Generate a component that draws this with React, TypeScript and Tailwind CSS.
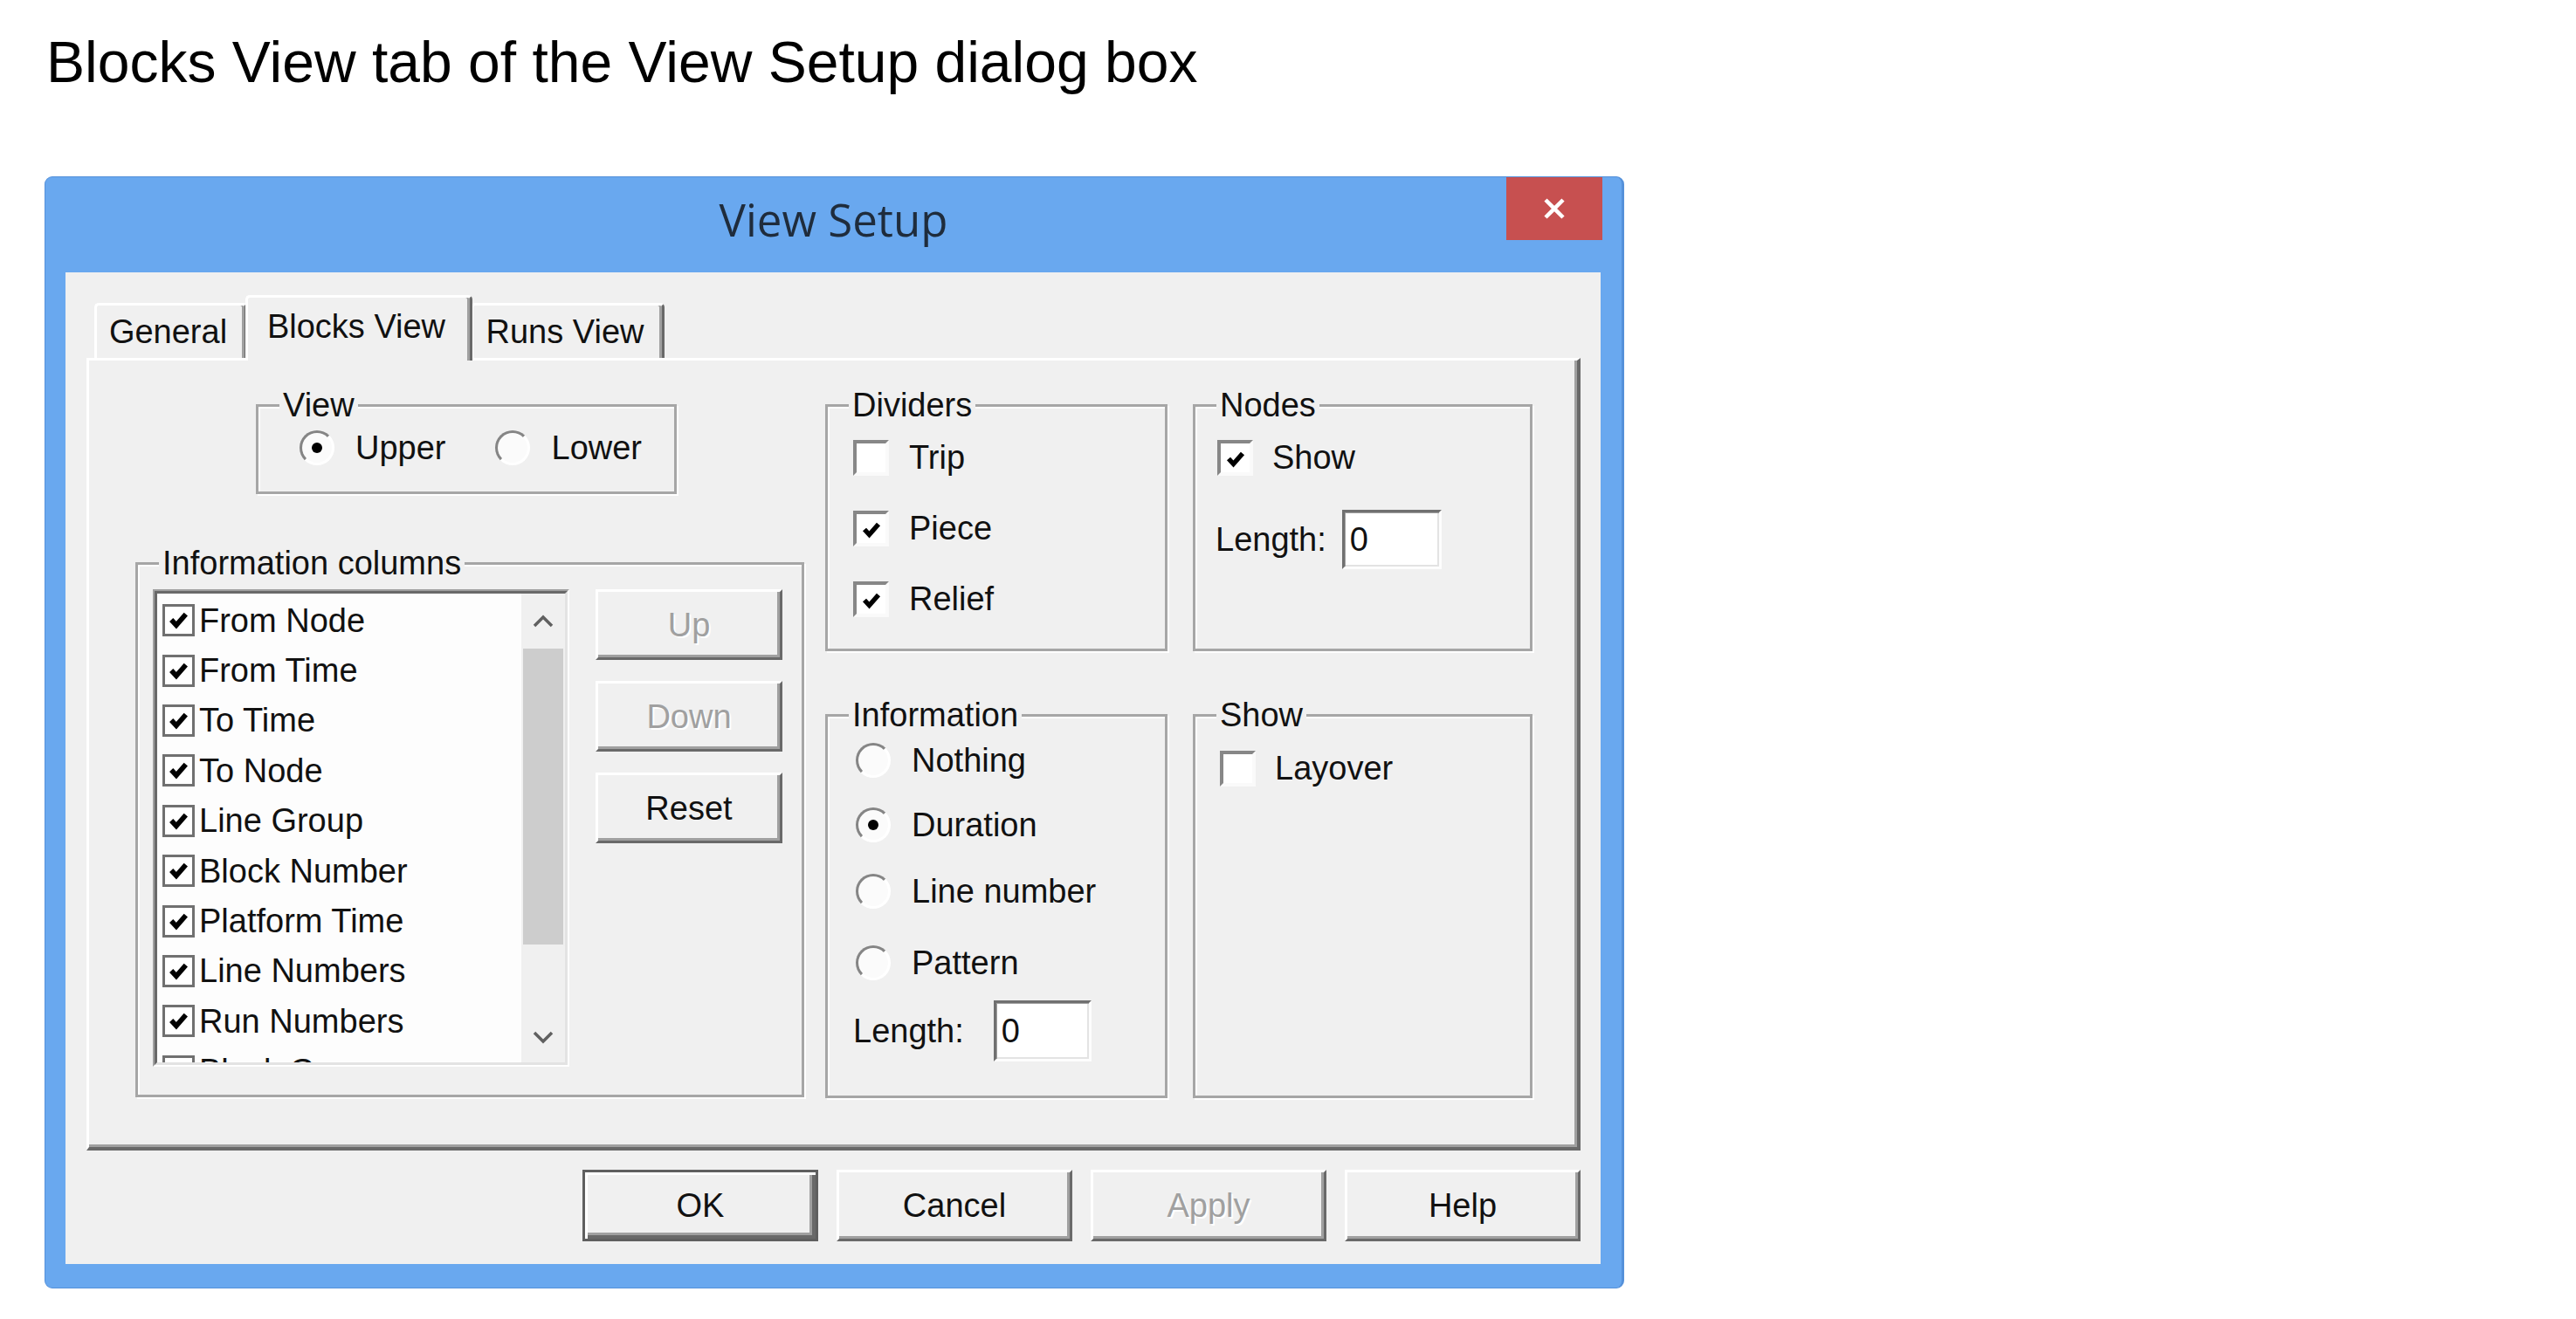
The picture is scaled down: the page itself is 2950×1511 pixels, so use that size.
import React from "react";

const ITEMS = [
  "From Node",
  "From Time",
  "To Time",
  "To Node",
  "Line Group",
  "Block Number",
  "Platform Time",
  "Line Numbers",
  "Run Numbers",
  "Block Group",
];

function Check({ size = 22 }: { size?: number }) {
  return (
    <svg width={size} height={size} viewBox="0 0 24 24">
      <polyline points="4,11.5 9.5,17.5 20,5.5" fill="none" stroke="#000" strokeWidth={5.5} />
    </svg>
  );
}

function Chevron({ up }: { up?: boolean }) {
  return (
    <svg width="26" height="16" viewBox="0 0 26 16">
      <polyline
        points={up ? "3,13 13,3 23,13" : "3,3 13,13 23,3"}
        fill="none"
        stroke="#606060"
        strokeWidth={3.5}
      />
    </svg>
  );
}

// etched group box, label sits over the top line
function Group({
  label,
  className,
  children,
}: {
  label: string;
  className: string;
  children?: React.ReactNode;
}) {
  return (
    <div
      className={
        "relative border-[3px] border-[#a6a6a6] shadow-[inset_2px_2px_0_#fff,2px_2px_0_#fff] " + className
      }
    >
      <span className="absolute -top-[24px] left-[24px] bg-[#f0f0f0] px-[4px] leading-[44px]">{label}</span>
      {children}
    </div>
  );
}

function Radio({ checked }: { checked?: boolean }) {
  return (
    <div className="flex h-[40px] w-[40px] shrink-0 items-center justify-center rounded-full border-[3px] border-t-[#858585] border-l-[#858585] border-b-white border-r-white bg-[#fbfbfb]">
      {checked && <div className="h-[12px] w-[12px] rounded-full bg-black" />}
    </div>
  );
}

function Check3D({ checked }: { checked?: boolean }) {
  return (
    <div className="flex h-[41px] w-[41px] shrink-0 items-end justify-center border-[4px] border-t-[#878787] border-l-[#878787] border-b-[#fafafa] border-r-[#fafafa] bg-white pb-[3px]">
      {checked && <Check size={24} />}
    </div>
  );
}

function Field({ className }: { className: string }) {
  return (
    <div
      className={
        "flex items-center border-[3px] border-t-[#707070] border-l-[#707070] border-b-[#fdfdfd] border-r-[#fdfdfd] bg-white pl-[6px] shadow-[inset_1px_1px_0_#a0a0a0,inset_-2px_-2px_0_#e3e3e3] " +
        className
      }
    >
      0
    </div>
  );
}

function Button({
  label,
  disabled,
  primary,
  className,
}: {
  label: string;
  disabled?: boolean;
  primary?: boolean;
  className: string;
}) {
  const frame = primary
    ? "border-[3px] border-[#5f5f5f] shadow-[inset_3px_3px_0_#fff,inset_-4px_-4px_0_#696969,inset_-7px_-7px_0_#a0a0a0]"
    : "border-[3px] border-t-white border-l-white border-b-[#696969] border-r-[#696969] shadow-[inset_-3px_-3px_0_#a0a0a0]";
  const text = disabled ? "text-[#a0a0a0] [text-shadow:2px_2px_0_#fff]" : "text-[#111]";
  return (
    <div className={`flex items-center justify-center bg-[#f0f0f0] ${frame} ${text} ${className}`}>{label}</div>
  );
}

function Listbox() {
  return (
    <div className="h-[547px] w-[477px] border-[2px] border-t-[#a0a0a0] border-l-[#a0a0a0] border-b-white border-r-white">
      <div className="flex h-full w-full border-[3px] border-t-[#696969] border-l-[#696969] border-b-[#e3e3e3] border-r-[#e3e3e3] bg-[#fdfdfd]">
        <div className="flex-1 overflow-hidden pl-[6px] pt-[2px]">
          {ITEMS.map((item) => (
            <div key={item} className="flex h-[57.4px] items-center gap-[5px]">
              <div className="flex h-[37px] w-[37px] shrink-0 items-center justify-center border-[3px] border-[#707070] bg-white">
                <Check size={25} />
              </div>
              <span className="whitespace-nowrap">{item}</span>
            </div>
          ))}
        </div>
        <div className="flex w-[50px] flex-col bg-[#f0f0f0]">
          <div className="flex h-[63px] items-center justify-center">
            <Chevron up />
          </div>
          <div className="mx-[2px] h-[339px] bg-[#cdcdcd]" />
          <div className="flex-1" />
          <div className="flex h-[59px] items-center justify-center">
            <Chevron />
          </div>
        </div>
      </div>
    </div>
  );
}

function Tab({ label, className }: { label: string; className: string }) {
  return (
    <div
      className={
        "flex h-[63px] items-center justify-center rounded-t-[5px] border-[3px] border-b-0 border-t-white border-l-white border-r-[#696969] bg-[#f0f0f0] pr-[6px] shadow-[inset_-3px_0_0_#a0a0a0] " +
        className
      }
    >
      {label}
    </div>
  );
}

export default function App() {
  return (
    <div className="min-h-screen w-full bg-white font-['Liberation_Sans',Arial,sans-serif] text-black">
      <div className="pl-[53px] pt-[38px] text-[66px] leading-[66px]">Blocks View tab of the View Setup dialog box</div>

      <div className="ml-[51px] mt-[98px] flex h-[1274px] w-[1809px] flex-col rounded-[9px] border border-r-[3px] border-[#5591da] bg-[#69a8ef]">
        {/* title bar */}
        <div className="grid h-[109px] grid-cols-[1fr_auto_1fr]">
          <div />
          <div className="pt-[14px] font-['Open_Sans',sans-serif] text-[51px] leading-[68px] text-[#1f2c3c]">
            View Setup
          </div>
          <div className="mr-[22px] flex h-[72px] w-[110px] items-center justify-center justify-self-end bg-[#c75050]">
            <svg width="30" height="28" viewBox="0 0 30 28">
              <path d="M5 4 L25 24 M25 4 L5 24" stroke="#fff" strokeWidth={4.5} />
            </svg>
          </div>
        </div>

        {/* client area */}
        <div className="ml-[23px] flex h-[1136px] w-[1758px] flex-col bg-[#f0f0f0] pl-[24px] pr-[23px] pt-[26px] text-[38px] leading-[44px] text-[#111]">
          {/* tabs */}
          <div className="flex h-[72px] items-end">
            <Tab label="General" className="ml-[9px] w-[175px]" />
            <div className="relative z-10 -mb-[3px] -ml-[2px] flex h-[75px] w-[260px] items-center justify-center rounded-t-[5px] border-[3px] border-b-0 border-t-white border-l-white border-r-[#696969] bg-[#f0f0f0] pb-[6px] pr-[6px] shadow-[inset_-3px_0_0_#a0a0a0]">
              Blocks View
            </div>
            <Tab label="Runs View" className="-ml-[2px] w-[222px]" />
          </div>

          {/* tab page */}
          <div className="flex h-[908px] border-[3px] border-b-[4px] border-r-[4px] border-t-white border-l-white border-b-[#696969] border-r-[#696969] pl-[53px] pt-[50px] shadow-[inset_-3px_-3px_0_#a0a0a0]">
            <div className="flex w-[766px] flex-col">
              <Group label="View" className="ml-[138px] h-[103px] w-[482px]">
                <div className="ml-[47px] mt-[25px] flex h-[44px] items-center">
                  <Radio checked />
                  <span className="ml-[24px]">Upper</span>
                  <div className="ml-[56px]">
                    <Radio />
                  </div>
                  <span className="ml-[25px]">Lower</span>
                </div>
              </Group>

              <Group
                label="Information columns"
                className="mt-[78px] flex h-[613px] w-[766px] gap-[30px] pl-[17px] pt-[28px]"
              >
                <Listbox />
                <div className="flex flex-col gap-[24px]">
                  <Button label="Up" disabled className="h-[81px] w-[214px]" />
                  <Button label="Down" disabled className="h-[81px] w-[214px]" />
                  <Button label="Reset" className="h-[81px] w-[214px]" />
                </div>
              </Group>
            </div>

            <div className="ml-[24px] flex w-[392px] flex-col">
              <Group label="Dividers" className="flex h-[283px] w-full flex-col gap-[37px] pl-[29px] pt-[36px]">
                <div className="flex h-[44px] items-center gap-[23px]">
                  <Check3D />
                  <span>Trip</span>
                </div>
                <div className="flex h-[44px] items-center gap-[23px]">
                  <Check3D checked />
                  <span>Piece</span>
                </div>
                <div className="flex h-[44px] items-center gap-[23px]">
                  <Check3D checked />
                  <span>Relief</span>
                </div>
              </Group>

              <Group label="Information" className="mt-[72px] flex h-[440px] w-full flex-col pl-[32px]">
                <div className="mt-[28px] flex h-[44px] items-center gap-[24px]">
                  <Radio />
                  <span>Nothing</span>
                </div>
                <div className="mt-[30px] flex h-[44px] items-center gap-[24px]">
                  <Radio checked />
                  <span>Duration</span>
                </div>
                <div className="mt-[32px] flex h-[44px] items-center gap-[24px]">
                  <Radio />
                  <span>Line number</span>
                </div>
                <div className="mt-[38px] flex h-[44px] items-center gap-[24px]">
                  <Radio />
                  <span>Pattern</span>
                </div>
                <div className="-ml-[3px] mt-[21px] flex h-[70px] items-center gap-[34px]">
                  <span>Length:</span>
                  <Field className="h-[70px] w-[112px]" />
                </div>
              </Group>
            </div>

            <div className="ml-[29px] flex w-[389px] flex-col">
              <Group label="Nodes" className="flex h-[283px] w-full flex-col">
                <div className="ml-[25px] mt-[36px] flex h-[44px] items-center gap-[22px]">
                  <Check3D checked />
                  <span>Show</span>
                </div>
                <div className="ml-[23px] mt-[38px] flex h-[68px] items-center gap-[18px]">
                  <span>Length:</span>
                  <Field className="h-[68px] w-[114px]" />
                </div>
              </Group>

              <Group label="Show" className="mt-[72px] flex h-[440px] w-full flex-col">
                <div className="ml-[28px] mt-[37px] flex h-[44px] items-center gap-[22px]">
                  <Check3D />
                  <span>Layover</span>
                </div>
              </Group>
            </div>
          </div>

          {/* dialog buttons */}
          <div className="mt-[22px] flex justify-end gap-[21px]">
            <Button label="OK" primary className="h-[82px] w-[270px]" />
            <Button label="Cancel" className="h-[82px] w-[270px]" />
            <Button label="Apply" disabled className="h-[82px] w-[270px]" />
            <Button label="Help" className="h-[82px] w-[270px]" />
          </div>
        </div>
      </div>
    </div>
  );
}
